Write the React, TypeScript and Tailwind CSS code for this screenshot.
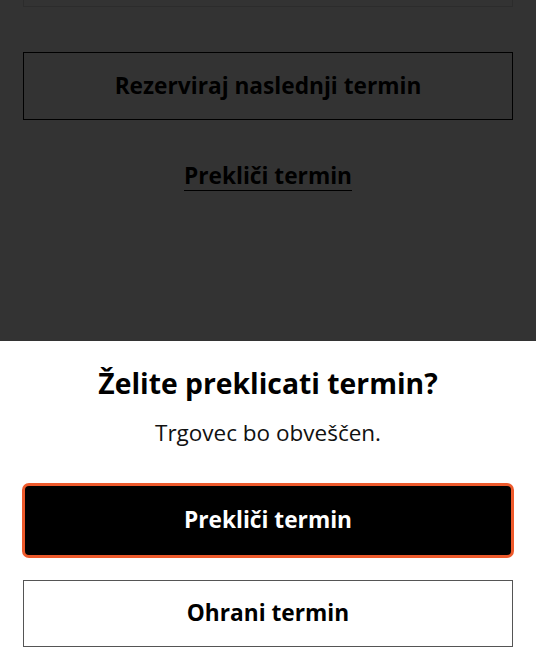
export default function App() {
  return (
    <div className="relative h-[655px] w-[536px] overflow-hidden bg-white font-['Open_Sans',sans-serif]">
      {/* Page behind the sheet */}
      <div className="px-[23px]">
        <div className="-mt-[40px] h-[47px] border border-[#dcdcdc] bg-white" />
        <button className="mt-[45px] flex h-[68px] w-full items-center justify-center border border-black bg-white text-[22.7px] font-bold text-black">
          Rezerviraj naslednji termin
        </button>
        <div className="mt-[42px] flex justify-center">
          <span className="border-b border-black text-[22.7px] font-bold leading-[28px] text-black">Prekliči termin</span>
        </div>
      </div>

      {/* Overlay */}
      <div className="absolute inset-0 bg-black/80" />

      {/* Bottom sheet */}
      <div className="absolute inset-x-0 top-[341px] bottom-0 bg-white px-[22px]">
        <h2 className="mt-[23px] text-center text-[28.3px] font-bold leading-[38px] text-black">Želite preklicati termin?</h2>
        <p className="mt-[16px] text-center text-[22.5px] leading-[30px] text-[#111]">Trgovec bo obveščen.</p>
        <button className="mt-[35px] flex h-[75px] w-full items-center justify-center rounded-[7px] border-[3px] border-[#ee5a2c] bg-black text-[22.7px] font-bold text-white">
          Prekliči termin
        </button>
        <div className="px-[1px]">
          <button className="mt-[22px] flex h-[67px] w-full items-center justify-center border border-[#555] bg-white text-[22.7px] font-bold text-black">
            Ohrani termin
          </button>
        </div>
      </div>
    </div>
  )
}
